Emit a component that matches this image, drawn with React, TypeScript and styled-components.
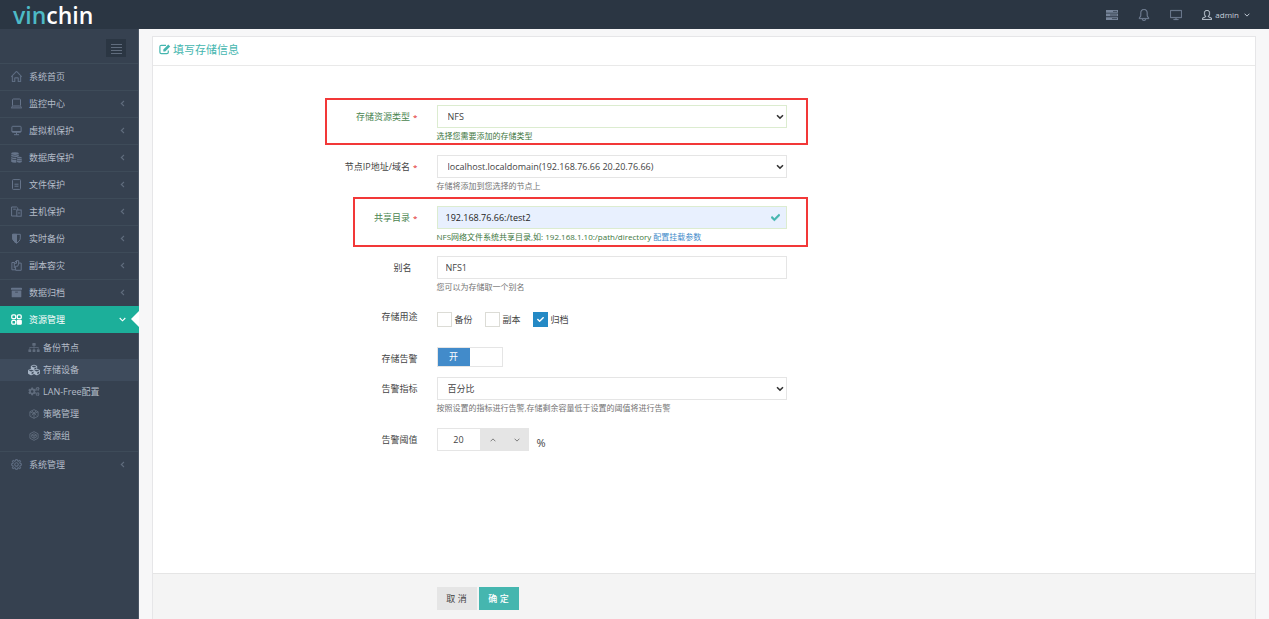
import React from "react";
import styled, { createGlobalStyle, css } from "styled-components";
import { SlBell, SlHome, SlScreenDesktop, SlUser, SlSettings } from "react-icons/sl";
import { FaArchive, FaCheck, FaCogs, FaCubes, FaSitemap } from "react-icons/fa";

const GlobalStyle = createGlobalStyle`
  *, *::before, *::after { box-sizing: border-box; }
  body {
    margin: 0;
    background: #f7f7f8;
    color: #444;
    font: 9px/12px "Open Sans", "Noto Sans CJK SC", sans-serif;
  }
  button, input, select { font: inherit; margin: 0; }
  a { text-decoration: none; color: inherit; }
  svg { display: block; flex: none; }
`;

const Page = styled.div`
  display: flex;
  flex-direction: column;
  height: 100vh;
  overflow: hidden;
`;

const TopBar = styled.header`
  display: flex;
  flex: none;
  align-items: center;
  justify-content: space-between;
  height: 29px;
  padding: 0 19px 0 13px;
  background: #2b3643;
`;

const Logo = styled.a`
  color: #fff;
  font-size: 23px;
  line-height: 28px;
  font-weight: 600;
  span { color: #4dbac6; }
`;

const TopTools = styled.div`
  display: flex;
  align-items: center;
  gap: 20px;
`;

const ToolButton = styled.button`
  display: flex;
  align-items: center;
  gap: 3px;
  padding: 0;
  border: 0;
  background: none;
  color: #77859a;
`;

const UserButton = styled(ToolButton)`
  color: #c6cfda;
  font-size: 8px;
  > svg:first-child { stroke: currentColor; stroke-width: 30; }
  > svg:last-child { margin-left: 2px; }
`;

const Columns = styled.div`
  display: flex;
  flex: 1;
  min-height: 0;
`;

const SideBar = styled.nav`
  flex: none;
  width: 139px;
  background: #364150;
  border-right: 1px solid #4a5564;
  color: #b4bcc8;
`;

const ToggleRow = styled.div`
  display: flex;
  justify-content: flex-end;
  padding: 10px 12px 6px 0;
`;

const Toggle = styled.button`
  display: grid;
  place-items: center;
  width: 20px;
  height: 18px;
  padding: 0;
  border: 0;
  background: #2b3643;
  color: #606c7d;
`;

const Menu = styled.ul`
  margin: 0;
  padding: 0;
  list-style: none;
`;

const MenuLink = styled.a<{ $active?: boolean }>`
  position: relative;
  display: flex;
  align-items: center;
  height: 27px;
  padding: 0 12px 1px 11px;
  border-top: 1px solid #3e4b59;
  > svg:first-child { color: #66748a; margin-right: 7px; }
  > svg:last-of-type:not(:first-child) { color: #606c7d; margin-left: auto; }
  ${(p) => p.$active && css`
    margin-right: -1px;
    padding-right: 13px;
    border-color: #1caf9a;
    background: #1caf9a;
    color: #fff;
    > svg:first-child, > svg:last-of-type:not(:first-child) { color: #fff; }
  `}
`;

const Pointer = styled.i`
  position: absolute;
  top: 4px;
  right: 0;
  border: solid transparent;
  border-width: 8px 8px 8px 0;
  border-right-color: #fff;
`;

const SubMenu = styled(Menu)`
  padding: 4px 0;
`;

const SubLink = styled.a<{ $active?: boolean }>`
  display: flex;
  align-items: center;
  gap: 3px;
  height: 22px;
  padding: 0 0 1px 28px;
  background: ${(p) => (p.$active ? "#3e4b5c" : "transparent")};
  > svg { width: 12px; color: ${(p) => (p.$active ? "#a7b5c6" : "#606c7d")}; }
`;

const Content = styled.main`
  display: flex;
  flex: 1;
  min-width: 0;
  padding: 7px 13px 0;
`;

const Panel = styled.section`
  display: flex;
  flex: 1;
  flex-direction: column;
  border: 1px solid #e6e6e8;
  border-bottom: 0;
  background: #fff;
`;

const PanelTitle = styled.h1`
  display: flex;
  align-items: center;
  gap: 2px;
  height: 29px;
  margin: 0;
  padding: 0 6px 3px;
  border-bottom: 1px solid #e9e9e9;
  color: #45b6af;
  font-size: 11px;
  line-height: 16px;
  font-weight: 400;
`;

const FormBody = styled.form`
  display: flex;
  flex: 1;
  flex-direction: column;
`;

const Fields = styled.div`
  flex: 1;
  padding-top: 39px;
`;

const Row = styled.div<{ $valid?: boolean; $height?: number }>`
  position: relative;
  display: grid;
  grid-template-columns: 25% 33.333%;
  align-items: start;
  height: ${(p) => p.$height ?? 50}px;
  color: ${(p) => (p.$valid ? "#4a8550" : "#444")};
  --line: ${(p) => (p.$valid ? "#dcecd0" : "#e5e5e5")};
  --help: ${(p) => (p.$valid ? "#3c763d" : "#737373")};
`;

const Highlight = styled.div<{ $wide?: boolean }>`
  position: absolute;
  top: ${(p) => (p.$wide ? "-7px" : "-9px")};
  bottom: ${(p) => (p.$wide ? "10px" : "9px")};
  left: ${(p) => (p.$wide ? "calc(25% - 104px)" : "calc(25% - 76px)")};
  right: calc(41.667% - 12px);
  border: 2px solid #f23838;
  pointer-events: none;
`;

const Caption = styled.label<{ $required?: boolean; $inset?: boolean }>`
  padding: 6px ${(p) => (p.$inset ? 17 : 11)}px 0 0;
  text-align: right;
  ${(p) => p.$required && css`
    &::after { content: "*"; margin-left: 3px; color: #e02222; font-size: 8px; }
  `}
`;

const Control = styled.div`
  position: relative;
  padding: 0 9px 0 8px;
`;

const boxed = css`
  display: block;
  height: 23px;
  border: 1px solid var(--line);
  border-radius: 0;
  background: #fff;
  color: #444;
  outline: 0;
`;

const SelectBox = styled.select`
  ${boxed}
  appearance: none;
  width: 100%;
  padding: 0 16px 0 10px;
`;

const SelectArrow = styled.svg`
  position: absolute;
  top: 9px;
  right: 12px;
  pointer-events: none;
`;

const TextBox = styled.input<{ $filled?: boolean }>`
  ${boxed}
  width: 100%;
  padding: 0 8px;
  background: ${(p) => (p.$filled ? "#e8f0fe" : "#fff")};
  color: ${(p) => (p.$filled ? "#222" : "#444")};
`;

const OkMark = styled(FaCheck)`
  position: absolute;
  top: 7px;
  right: 16px;
  color: #45b6af;
  stroke: currentColor;
  stroke-width: 30;
`;

const Help = styled.p`
  margin: 2px 0 0;
  color: var(--help);
  font-size: 8px;
  white-space: nowrap;
  a { color: #428bca; }
`;

const Checks = styled.div`
  display: flex;
  gap: 12px;
  padding: 7px 8px 0;
`;

const CheckLabel = styled.label`
  display: flex;
  align-items: center;
  gap: 3px;
`;

const CheckFrame = styled.span`
  position: relative;
  display: block;
  width: 15px;
  height: 15px;
  svg { position: absolute; top: 4px; left: 4px; color: #fff; pointer-events: none; }
`;

const CheckBox = styled.input`
  appearance: none;
  display: block;
  width: 15px;
  height: 15px;
  border: 1px solid #dcdcd6;
  background: #fff;
  &:checked { border-color: #2489c5; background: #2489c5; }
`;

const Switch = styled.button`
  display: flex;
  width: 66px;
  height: 20px;
  padding: 0;
  border: 1px solid #e5e5e5;
  background: #fff;
  color: #fff;
  span { width: 50%; height: 18px; background: #428bca; line-height: 18px; }
`;

const Spinner = styled.div`
  display: flex;
  align-items: flex-start;
  padding: 0 8px;
`;

const NumberBox = styled.input`
  ${boxed}
  width: 44px;
  padding: 0;
  text-align: center;
`;

const Step = styled.button`
  display: grid;
  place-items: center;
  width: 24px;
  height: 23px;
  padding: 0;
  border: 0;
  background: #e5e5e5;
  color: #777;
`;

const Unit = styled.span`
  padding: 9px 0 0 8px;
  font-size: 11px;
`;

const Actions = styled.footer`
  display: flex;
  gap: 2px;
  height: 46px;
  padding: 13px 0 0 calc(25% + 8px);
  border-top: 1px solid #e5e5e5;
  background: #f4f4f4;
`;

const Button = styled.button<{ $primary?: boolean }>`
  width: 40px;
  height: 23px;
  padding: 0;
  border: 0;
  background: ${(p) => (p.$primary ? "#45b6af" : "#e5e5e5")};
  color: ${(p) => (p.$primary ? "#fff" : "#444")};
  font-weight: ${(p) => (p.$primary ? 500 : 400)};
`;

type IconProps = { size?: number; children: React.ReactNode };

const Line = ({ size = 11, children }: IconProps) => (
  <svg width={size} height={size} viewBox="0 0 11 11" fill="none" stroke="currentColor" strokeWidth="1">
    {children}
  </svg>
);

const Chevron = ({ dir, size = 7 }: { dir: "left" | "down" | "up"; size?: number }) => (
  <svg width={size} height={size} viewBox="0 0 7 7" fill="none" stroke="currentColor" strokeWidth="1.1">
    <path d={{ left: "M5 1 2.300 3.500 5 6", down: "M.7 2 3.500 4.800 6.300 2", up: "M.7 5 3.500 2.200 6.300 5" }[dir]} />
  </svg>
);

const Select = ({ id, option }: { id: string; option: string }) => (
  <>
    <SelectBox id={id}><option>{option}</option></SelectBox>
    <SelectArrow width="8" height="6" viewBox="0 0 8 6" fill="none" stroke="#333" strokeWidth="1.500">
      <path d="M1 1.300 4 4.100 7 1.300" />
    </SelectArrow>
  </>
);

const EditIcon = () => (
  <svg width="12" height="11" viewBox="0 0 12 11" fill="none" stroke="currentColor" strokeWidth="1.200">
    <path d="M7 1.300H2.300Q.9 1.300.9 2.700v5.600q0 1.400 1.400 1.400h5.600q1.400 0 1.400-1.400V6.600" />
    <path d="M4.300 7.500V5.500L9.300.5l1.900 1.900-5 5z" fill="currentColor" stroke="none" />
  </svg>
);
const LaptopIcon = () => (
  <Line><rect x="1.500" y="1" width="8" height="7" rx=".8" /><path d="M.2 9.900h10.600M1.500 8 .6 9.600M9.500 8l.9 1.600" /></Line>
);
const MonitorIcon = () => (
  <Line><rect x=".9" y="1.300" width="9.200" height="6" rx=".8" /><path d="M1 6.500h9M5.500 7.300v2.400M3 9.700h5" /></Line>
);
const StackIcon = () => (
  <Line>
    <g fill="currentColor" stroke="none">
      <ellipse cx="4" cy="1.600" rx="3.800" ry="1.400" />
      <path d="M.2 2.500q3.800 2 7.600 0v1.800L6 4.900q-3 .4-5.800-.6zM.2 4.900q2.600 1.200 5.200.9v1.500Q2.400 7.500.2 6.500zM.2 7.100q2.600 1.200 5.200.9v2.600q-3.600.3-5.200-.9z" />
      <ellipse cx="8.400" cy="5.600" rx="2.400" ry=".9" />
      <path d="M6 6.500q2.400 1 4.800 0v1.300q-2.400 1-4.800 0zM6 8.300q2.400 1 4.800 0v1.600q-2.400 1.500-4.800 0z" />
    </g>
  </Line>
);
const FileIcon = () => (
  <Line><rect x="1.500" y=".6" width="8" height="9.800" rx=".8" /><path d="M3.500 5.200h4M3.500 7.200h4" /></Line>
);
const HostIcon = () => (
  <Line><path d="M5.700 10H.6V1h5l1.200 1.200V4M2.200 3.200h2.600" /><rect x="5.800" y="4" width="4.400" height="6.200" /><path d="M8 6v2.200" /></Line>
);
const ShieldIcon = () => (
  <Line><path d="M1.700 1.300h7.600v3.600c0 2.400-1.700 4.100-3.800 5.200-2.100-1.100-3.800-2.800-3.800-5.200z" /><path d="M1.700 1.300h3.800v8.800C3.400 9 1.700 7.300 1.700 4.900z" fill="currentColor" /></Line>
);
const CopyIcon = () => (
  <Line>
    <path d="M3 2.500H.9v7.300h3.300" />
    <path d="M3.300 8.200V2.800L5.300.7h2.400v2.400M3.300 3.300h2.200V.8" />
    <path d="M7.700 3.100h2.500v7.200H4.600V6.200h2.200L7.700 3.100z" />
  </Line>
);
const BlocksIcon = () => (
  <Line>
    <g strokeWidth="1.300">
      <rect x=".8" y=".8" width="3.900" height="3.900" rx="1.200" /><rect x="6.300" y=".8" width="3.900" height="3.900" rx="1.200" />
      <rect x=".8" y="6.300" width="3.900" height="3.900" rx="1.200" /><rect x="6.300" y="6.300" width="3.900" height="3.900" rx=".6" fill="currentColor" />
    </g>
  </Line>
);
const TasksIcon = () => (
  <svg width="12" height="10" viewBox="0 0 12 10" fill="currentColor">
    <path d="M0 0h12v2.700H0zM0 3.600h12v2.700H0zM0 7.200h12v2.700H0z" />
    <path d="M7 1.400h4M4 5h7M6 8.600h5" stroke="#2b3643" strokeWidth=".7" />
  </svg>
);

const mainMenu: { label: string; icon: React.ReactNode; plain?: boolean }[] = [
  { label: "系统首页", icon: <SlHome size={11} stroke="currentColor" strokeWidth={30} />, plain: true },
  { label: "监控中心", icon: <LaptopIcon /> },
  { label: "虚拟机保护", icon: <MonitorIcon /> },
  { label: "数据库保护", icon: <StackIcon /> },
  { label: "文件保护", icon: <FileIcon /> },
  { label: "主机保护", icon: <HostIcon /> },
  { label: "实时备份", icon: <ShieldIcon /> },
  { label: "副本容灾", icon: <CopyIcon /> },
  { label: "数据归档", icon: <FaArchive size={11} /> },
];

const subMenu = [
  { label: "备份节点", icon: <FaSitemap size={9} /> },
  { label: "存储设备", icon: <FaCubes size={12} />, active: true },
  { label: "LAN-Free配置", icon: <FaCogs size={9} /> },
  { label: "策略管理", icon: <Line size={10}><path d="M5.500.7 10 3v5L5.500 10.300 1 8V3zM1 3l4.500 2.300L10 3M5.500 5.300v5M3 2l5 5M8 2 3 7" /></Line> },
  { label: "资源组", icon: <Line size={10}><path d="M5.500.7 10 3v5L5.500 10.300 1 8V3z" /><path d="M5.500 3 8 4.200v2.600L5.500 8 3 6.800V4.200zM3 4.200l2.500 1.300L8 4.200M5.500 5.500V8" /></Line> },
];

const uses = [
  { label: "备份", checked: false },
  { label: "副本", checked: false },
  { label: "归档", checked: true },
];

export default function App() {
  const [on, setOn] = React.useState(true);
  const [limit, setLimit] = React.useState(20);
  const [checked, setChecked] = React.useState(uses.map((u) => u.checked));

  return (
    <Page>
      <GlobalStyle />
      <TopBar>
        <Logo href="#"><span>vin</span>chin</Logo>
        <TopTools>
          <ToolButton aria-label="任务"><TasksIcon /></ToolButton>
          <ToolButton aria-label="通知"><SlBell size={12} stroke="currentColor" strokeWidth={20} /></ToolButton>
          <ToolButton aria-label="屏幕"><SlScreenDesktop size={12} stroke="currentColor" strokeWidth={20} /></ToolButton>
          <UserButton><SlUser size={10} />admin<Chevron dir="down" size={6} /></UserButton>
        </TopTools>
      </TopBar>
      <Columns>
        <SideBar>
          <ToggleRow>
            <Toggle aria-label="折叠菜单">
              <Line><path d="M0 1.500h11M0 4.500h11M0 7.500h11M0 10.500h11" /></Line>
            </Toggle>
          </ToggleRow>
          <Menu>
            {mainMenu.map((m) => (
              <li key={m.label}>
                <MenuLink href="#">{m.icon}{m.label}{!m.plain && <Chevron dir="left" />}</MenuLink>
              </li>
            ))}
            <li>
              <MenuLink href="#" $active><BlocksIcon />资源管理<Chevron dir="down" /><Pointer /></MenuLink>
              <SubMenu>
                {subMenu.map((m) => (
                  <li key={m.label}><SubLink href="#" $active={m.active}>{m.icon}{m.label}</SubLink></li>
                ))}
              </SubMenu>
            </li>
            <li>
              <MenuLink href="#"><SlSettings size={11} stroke="currentColor" strokeWidth={30} />系统管理<Chevron dir="left" /></MenuLink>
            </li>
          </Menu>
        </SideBar>
        <Content>
          <Panel>
            <PanelTitle><EditIcon />填写存储信息</PanelTitle>
            <FormBody onSubmit={(e) => e.preventDefault()}>
              <Fields>
                <Row $valid>
                  <Caption htmlFor="type" $required>存储资源类型</Caption>
                  <Control>
                    <Select id="type" option="NFS" />
                    <Help>选择您需要添加的存储类型</Help>
                  </Control>
                  <Highlight $wide />
                </Row>
                <Row $height={51}>
                  <Caption htmlFor="node" $required>节点IP地址/域名</Caption>
                  <Control>
                    <Select id="node" option="localhost.localdomain(192.168.76.66 20.20.76.66)" />
                    <Help>存储将添加到您选择的节点上</Help>
                  </Control>
                </Row>
                <Row $valid>
                  <Caption htmlFor="share" $required>共享目录</Caption>
                  <Control>
                    <TextBox id="share" defaultValue="192.168.76.66:/test2" $filled />
                    <OkMark size={9} />
                    <Help>NFS网络文件系统共享目录,如: 192.168.1.10:/path/directory <a href="#">配置挂载参数</a></Help>
                  </Control>
                  <Highlight />
                </Row>
                <Row $height={49}>
                  <Caption htmlFor="alias" $inset>别名</Caption>
                  <Control>
                    <TextBox id="alias" defaultValue="NFS1" />
                    <Help>您可以为存储取一个别名</Help>
                  </Control>
                </Row>
                <Row $height={42}>
                  <Caption as="span">存储用途</Caption>
                  <Checks>
                    {uses.map((u, i) => (
                      <CheckLabel key={u.label}>
                        <CheckFrame>
                          <CheckBox
                            type="checkbox"
                            checked={checked[i]}
                            onChange={() => setChecked(checked.map((c, j) => (j === i ? !c : c)))}
                          />
                          {checked[i] && <FaCheck size={7} />}
                        </CheckFrame>
                        {u.label}
                      </CheckLabel>
                    ))}
                  </Checks>
                </Row>
                <Row $height={30}>
                  <Caption htmlFor="alarm">存储告警</Caption>
                  <Control>
                    <Switch id="alarm" type="button" role="switch" aria-checked={on} onClick={() => setOn(!on)}>
                      {on && <span>开</span>}
                    </Switch>
                  </Control>
                </Row>
                <Row $height={51}>
                  <Caption htmlFor="metric">告警指标</Caption>
                  <Control>
                    <Select id="metric" option="百分比" />
                    <Help>按照设置的指标进行告警,存储剩余容量低于设置的阈值将进行告警</Help>
                  </Control>
                </Row>
                <Row>
                  <Caption htmlFor="limit">告警阈值</Caption>
                  <Spinner>
                    <NumberBox id="limit" value={limit} onChange={(e) => setLimit(Number(e.target.value) || 0)} />
                    <Step type="button" aria-label="增加" onClick={() => setLimit(limit + 1)}><Chevron dir="up" size={6} /></Step>
                    <Step type="button" aria-label="减少" onClick={() => setLimit(limit - 1)}><Chevron dir="down" size={6} /></Step>
                    <Unit>%</Unit>
                  </Spinner>
                </Row>
              </Fields>
              <Actions>
                <Button type="button">取 消</Button>
                <Button type="submit" $primary>确 定</Button>
              </Actions>
            </FormBody>
          </Panel>
        </Content>
      </Columns>
    </Page>
  );
}
